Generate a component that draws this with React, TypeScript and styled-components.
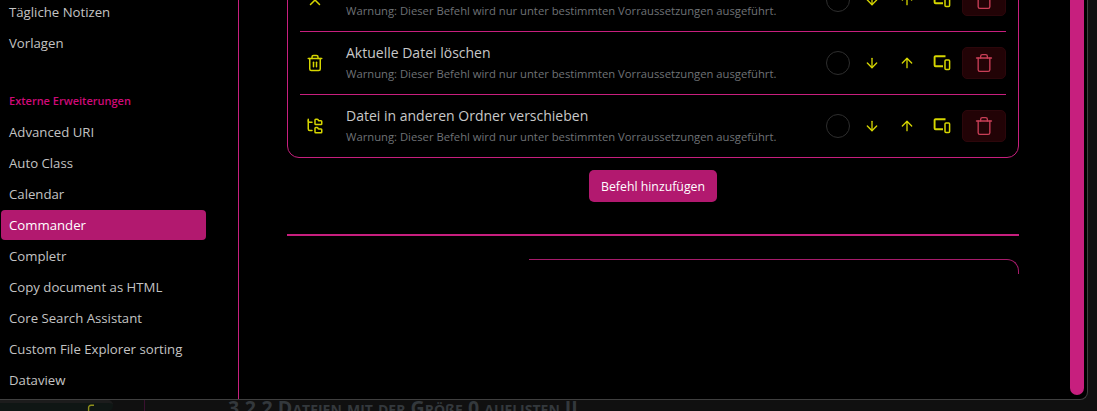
import { FC } from "react";
import styled, { createGlobalStyle } from "styled-components";
import { ArrowDown, ArrowUp, FolderTree, Trash, Trash2, X } from "lucide-react";

const pluginItems = [
  "Advanced URI",
  "Auto Class",
  "Calendar",
  "Commander",
  "Completr",
  "Copy document as HTML",
  "Core Search Assistant",
  "Custom File Explorer sorting",
  "Dataview",
];

const commands = [
  { title: "", icon: <X size={18} /> },
  { title: "Aktuelle Datei löschen", icon: <Trash2 size={18} /> },
  { title: "Datei in anderen Ordner verschieben", icon: <FolderTree size={18} /> },
];

const warning = "Warnung: Dieser Befehl wird nur unter bestimmten Vorraussetzungen ausgeführt.";

const DevicesIcon: FC = () => (
  <svg width="18" height="16" viewBox="0 0 18 16" fill="none" stroke="currentColor" strokeWidth="1.5">
    <path d="M12.5 1.2H2.6a1 1 0 0 0-1 1v8a1 1 0 0 0 1 1H10" strokeWidth="1.9" />
    <rect x="12" y="5" width="4.6" height="9.5" rx="1" />
  </svg>
);

const Controls: FC = () => (
  <Actions>
    <Round />
    <IconSlot><ArrowDown size={16} /></IconSlot>
    <IconSlot><ArrowUp size={16} /></IconSlot>
    <IconSlot><DevicesIcon /></IconSlot>
    <DeleteBtn><Trash size={20} strokeWidth={1.6} /></DeleteBtn>
  </Actions>
);

export default function App() {
  return (
    <Page>
      <GlobalStyle />
      <Modal>
        <Sidebar>
          <NavItem>Tägliche Notizen</NavItem>
          <NavItem>Vorlagen</NavItem>
          <SectionTitle>Externe Erweiterungen</SectionTitle>
          {pluginItems.map((item) => (
            <NavItem key={item} $active={item === "Commander"}>{item}</NavItem>
          ))}
        </Sidebar>
        <Content>
          <CommandList>
            {commands.map(({ title, icon }) => (
              <CommandRow key={title}>
                <RowIcon>{icon}</RowIcon>
                <RowText>
                  <Title>{title}</Title>
                  <Warning>{warning}</Warning>
                </RowText>
                <Controls />
              </CommandRow>
            ))}
          </CommandList>
          <AddRow>
            <AddBtn>Befehl hinzufügen</AddBtn>
          </AddRow>
          <Divider />
          <NextCard />
        </Content>
        <ScrollTrack>
          <ScrollThumb />
        </ScrollTrack>
      </Modal>
      <Behind>
        <BehindPanel>
          <svg width="8" height="7" viewBox="0 0 8 7" fill="none" stroke="#8f8f1c" strokeWidth="1.4">
            <path d="M7 1.2H4a2.4 2.4 0 0 0-2.4 2.4V7" />
          </svg>
        </BehindPanel>
        <BehindGutter />
        <BehindHeading>
          3.2.2 Dateien mit der Grö<Eszett>ß</Eszett>e 0 auflisten II
        </BehindHeading>
      </Behind>
    </Page>
  );
}

const GlobalStyle = createGlobalStyle`
  html, body {
    margin: 0;
    padding: 0;
    background: #101010;
    overflow: hidden;
  }
  * {
    box-sizing: border-box;
  }
`;

const Page = styled.div`
  width: 1097px;
  height: 411px;
  overflow: hidden;
  background: #101010;
  font-family: "Open Sans", "Noto Sans", "Liberation Sans", sans-serif;
`;

const Modal = styled.div`
  display: flex;
  width: 1088px;
  height: 400px;
  background: #000000;
  border-right: 1px solid #3f3f3f;
  border-bottom: 1px solid #3f3f3f;
  border-bottom-right-radius: 8px;
  overflow: hidden;
`;

const Sidebar = styled.nav`
  width: 239px;
  flex: none;
  height: 100%;
  padding: 0 32px 0 1px;
  border-right: 1px solid #c71f7e;
  overflow: hidden;
`;

const NavItem = styled.div<{ $active?: boolean }>`
  width: 205px;
  height: 30px;
  margin-bottom: 1px;
  line-height: 31px;
  padding-left: 8px;
  font-size: 13.2px;
  border-radius: 4px;
  white-space: nowrap;
  color: ${(p) => (p.$active ? "#ffffff" : "#c3c3c3")};
  background: ${(p) => (p.$active ? "#b2196f" : "transparent")};

  &:first-child {
    margin-top: -3px;
  }
`;

const SectionTitle = styled.div`
  margin-top: 27px;
  height: 32px;
  line-height: 31px;
  padding-left: 8px;
  font-size: 11px;
  font-weight: 600;
  color: #cf0a78;
  white-space: nowrap;
`;

const Content = styled.main`
  width: 781px;
  flex: none;
  height: 100%;
  padding: 0 0 0 48px;
  overflow: hidden;
`;

const CommandList = styled.div`
  width: 732px;
  height: 190px;
  margin-top: -32px;
  padding: 0 12px;
  border: 1px solid #c71f7e;
  border-radius: 12px;
`;

const CommandRow = styled.div`
  height: 63px;
  display: flex;
  align-items: center;
  border-bottom: 1px solid #c71f7e;

  &:last-child {
    height: 62px;
    border-bottom: 0;
  }
`;

const RowIcon = styled.div`
  width: 46px;
  flex: none;
  display: flex;
  padding-left: 6px;
  color: #d6d600;
`;

const RowText = styled.div`
  flex: 1;
  min-width: 0;
  padding-bottom: 2px;
`;

const Title = styled.div`
  min-height: 20px;
  font-size: 14px;
  line-height: 20px;
  color: #c8c8c8;
  margin-bottom: 3px;
`;

const Warning = styled.div`
  font-size: 11.25px;
  line-height: 16px;
  color: #6f7276;
  white-space: nowrap;
`;

const Actions = styled.div`
  display: flex;
  align-items: center;
  flex: none;
`;

const Round = styled.div`
  width: 24px;
  height: 24px;
  border: 1px solid #2e2e2e;
  border-radius: 50%;
  margin-right: 4px;
`;

const IconSlot = styled.div`
  width: 35px;
  display: flex;
  justify-content: center;
  color: #d6d600;
`;

const DeleteBtn = styled.div`
  width: 44px;
  height: 32px;
  margin-left: 3px;
  display: flex;
  align-items: center;
  justify-content: center;
  border-radius: 5px;
  background: #220306;
  border: 1px solid #2c070b;
  color: #c93f57;
`;

const AddRow = styled.div`
  width: 732px;
  display: flex;
  justify-content: center;
  margin-top: 12px;
`;

const AddBtn = styled.button`
  width: 128px;
  height: 32px;
  padding: 0;
  border: 0;
  border-radius: 5px;
  background: #b2196f;
  color: #ffffff;
  font: inherit;
  font-size: 12.3px;
`;

const Divider = styled.div`
  width: 732px;
  height: 2px;
  margin-top: 32px;
  background: #c71f7e;
`;

const NextCard = styled.div`
  width: 490px;
  height: 15px;
  margin: 23px 0 0 242px;
  border-top: 1px solid #a61b6b;
  border-right: 1px solid #a61b6b;
  border-radius: 0 12px 0 0;
`;

const ScrollTrack = styled.div`
  flex: 1;
  padding-right: 3px;
  display: flex;
  justify-content: flex-end;
`;

const ScrollThumb = styled.div`
  width: 14px;
  height: 395px;
  border-radius: 0 0 7px 7px;
  background: #c71f7e;
`;

const Behind = styled.div`
  display: flex;
  height: 11px;
  overflow: hidden;
`;

const BehindPanel = styled.div`
  width: 113px;
  flex: none;
  display: flex;
  align-items: flex-end;
  justify-content: flex-end;
  padding-right: 18px;
  background: #0f1614;
  border-top: 3px solid #1c1c1c;
  border-radius: 0 5px 5px 0;
`;

const BehindGutter = styled.div`
  width: 32px;
  flex: none;
  border-right: 1px solid #3a1030;
`;

const BehindHeading = styled.div`
  margin-left: 83px;
  font-size: 19.6px;
  line-height: 24px;
  margin-top: -4px;
  font-weight: 700;
  font-variant: small-caps;
  color: #33383c;
  white-space: nowrap;
`;

const Eszett = styled.span`
  font-variant: normal;
  font-size: 14px;
`;
